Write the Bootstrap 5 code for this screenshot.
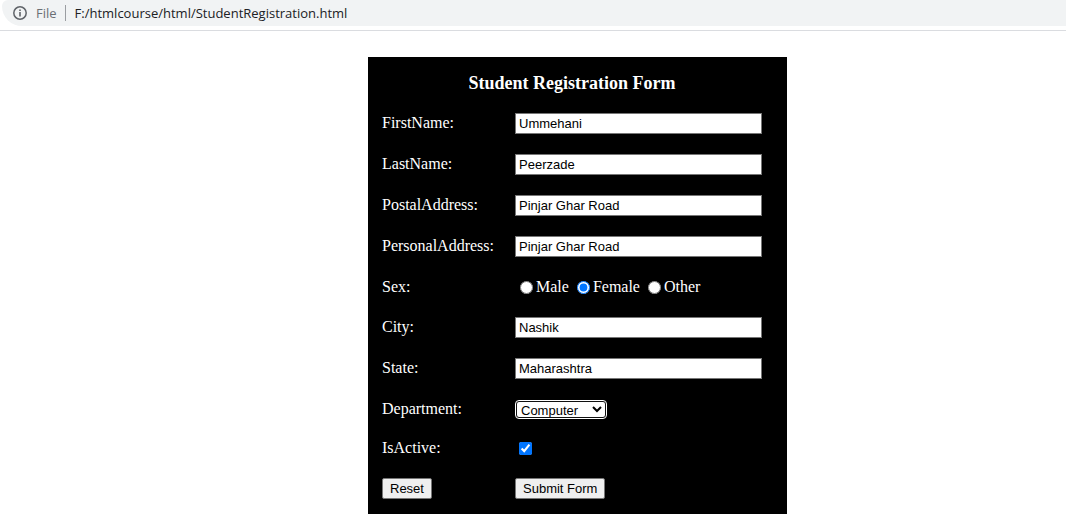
<!DOCTYPE html>
<html lang="en">
<head>
<meta charset="utf-8">
<meta name="viewport" content="width=device-width, initial-scale=1">
<title>Student Registration Form</title>
<link href="https://cdn.jsdelivr.net/npm/bootstrap@5.3.0/dist/css/bootstrap.min.css" rel="stylesheet">
<style>
  body { background: #fff; color: #000; font-family: "Liberation Serif", "Times New Roman", serif; }
  .address-bar { border-bottom: 1px solid #dadce0; height: 31px; padding-left: 2px; }
  .address-pill { background: #f1f3f4; border-radius: 6px 0 0 20px; height: 26px; padding-left: 11px; font: 13px/20px "Open Sans", "Noto Sans", sans-serif; color: #202124; }
  .scheme { color: #6b6f74; margin-left: 9px; }
  .divider { width: 1px; height: 16px; background: #9a9da1; margin: 0 9px 0 8px; }
  .page-area { padding: 26px 0 16px 89px; }
  .reg-form { width: 419px; max-width: 100%; background: #000; color: #fff; padding: 15px 25px 15px 14px; font-size: 16px; line-height: 20px; }
  .reg-title { font-size: 18px; line-height: 22px; margin: 0 0 19px; }
  .fields { gap: 20px; }
  .field-row { display: grid; grid-template-columns: 133px minmax(0, 1fr); align-items: center; height: 21px; }
  .field-row.mid { height: 20px; }
  .field-row.low { height: 19px; line-height: 18px; }
  .field-row > label { align-self: start; }
  .reg-form input[type=text], .reg-form select, .reg-form button { font: 13px/15px "Liberation Sans", Arial, sans-serif; color: #000; }
  .reg-form input[type=text] { width: 100%; height: 21px; padding: 1px 3px; border: 1px solid #767676; background: #fff; }
  .reg-form input[type=radio], .reg-form input[type=checkbox] { width: 13px; height: 13px; margin: 0; accent-color: #0075ff; }
  .reg-form select { width: 92px; height: 19px; padding: 0; border: 2px solid #101010; border-radius: 4px; background: #fff; outline: 1px solid #fff; outline-offset: -1px; }
  .reg-form button { height: 21px; padding: 1px 7px; border: 1px solid #767676; border-radius: 2px; background: #efefef; justify-self: start; white-space: nowrap; }
  .choice { display: flex; align-items: center; gap: 3px; }
  .choices { gap: 8px; padding-left: 5px; }
</style>
</head>
<body>
<header class="address-bar">
  <div class="address-pill d-flex align-items-center">
    <svg width="14" height="14" viewBox="0 0 14 14" fill="none" stroke="#5f6368" aria-hidden="true"><circle cx="7" cy="7" r="6.2" stroke-width="1.5"/><path d="M7 6.1v4.3M7 3.5v1.6" stroke-width="1.6"/></svg>
    <span class="scheme">File</span>
    <span class="divider"></span>
    <span>F:/htmlcourse/html/StudentRegistration.html</span>
  </div>
</header>
<main class="page-area d-flex justify-content-center">
  <form class="reg-form" onsubmit="return false">
    <h1 class="reg-title text-center fw-bold">Student Registration Form</h1>
    <div class="d-grid fields">
      <div class="field-row"><label for="first">FirstName:</label><input type="text" id="first" value="Ummehani"></div>
      <div class="field-row"><label for="last">LastName:</label><input type="text" id="last" value="Peerzade"></div>
      <div class="field-row"><label for="postal">PostalAddress:</label><input type="text" id="postal" value="Pinjar Ghar Road"></div>
      <div class="field-row"><label for="personal">PersonalAddress:</label><input type="text" id="personal" value="Pinjar Ghar Road"></div>
      <div class="field-row mid" role="radiogroup" aria-labelledby="sex-label">
        <span id="sex-label">Sex:</span>
        <div class="choices d-flex">
          <label class="choice"><input type="radio" name="sex">Male</label>
          <label class="choice"><input type="radio" name="sex" checked>Female</label>
          <label class="choice"><input type="radio" name="sex">Other</label>
        </div>
      </div>
      <div class="field-row"><label for="city">City:</label><input type="text" id="city" value="Nashik"></div>
      <div class="field-row"><label for="state">State:</label><input type="text" id="state" value="Maharashtra"></div>
      <div class="field-row mid"><label for="dept">Department:</label><select id="dept"><option>Computer</option></select></div>
      <div class="field-row low"><label for="active">IsActive:</label><div class="d-flex ps-1"><input type="checkbox" id="active" checked></div></div>
      <div class="field-row"><button type="reset">Reset</button><button type="submit">Submit Form</button></div>
    </div>
  </form>
</main>
<script src="https://cdn.jsdelivr.net/npm/bootstrap@5.3.0/dist/js/bootstrap.bundle.min.js"></script>
</body>
</html>
